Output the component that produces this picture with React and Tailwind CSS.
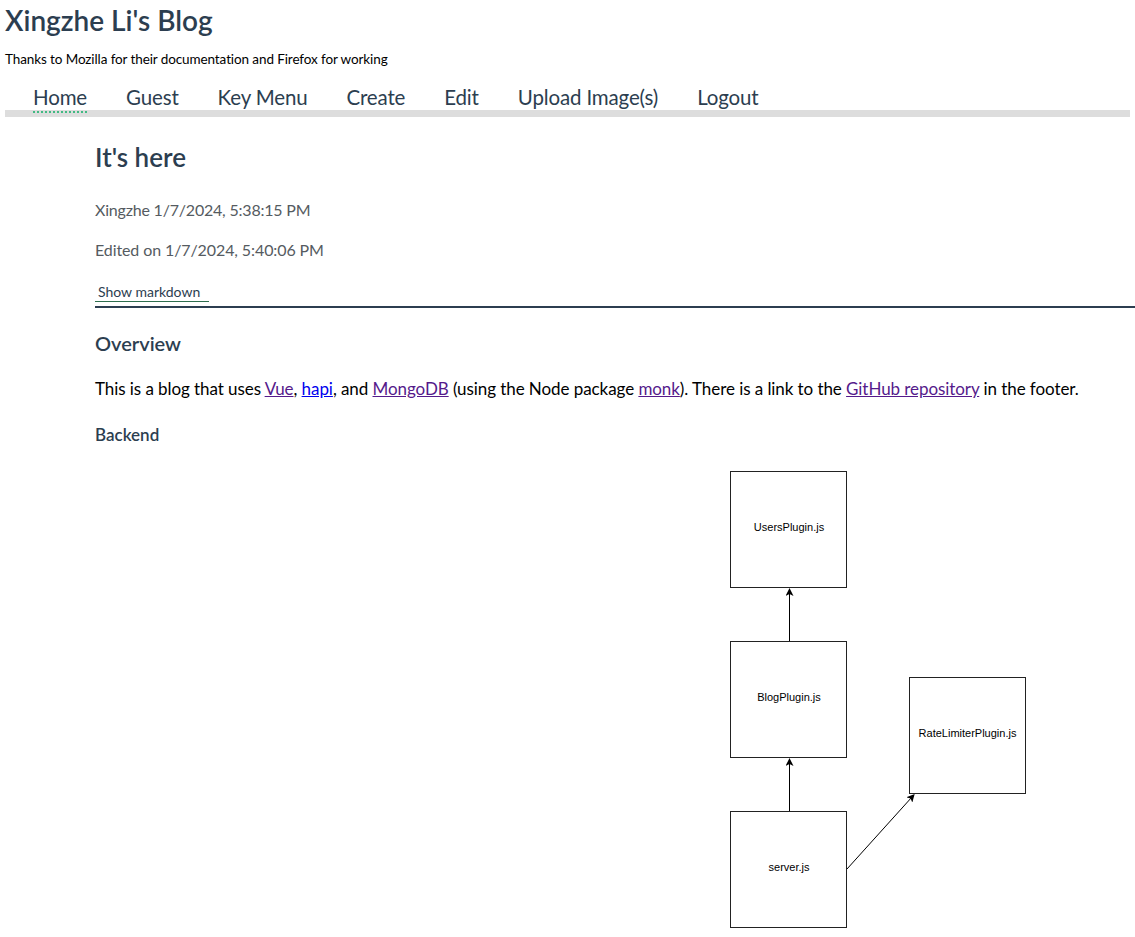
import React from "react";

const font = { fontFamily: "Lato, 'Noto Sans', sans-serif" };

function Diagram() {
  return (
    <svg width="320" height="462" viewBox="0 0 320 462" className="block ml-[634px] mt-[22px]">
      <defs>
        <marker id="ah" markerWidth="8" markerHeight="8" refX="4" refY="4" orient="auto" markerUnits="userSpaceOnUse">
          <path d="M0,0 L8,4 L0,8 L2,4 Z" fill="#000" />
        </marker>
      </defs>
      <g fill="#fff" stroke="#222" strokeWidth="1">
        <rect x="1.5" y="1.5" width="116" height="116" />
        <rect x="1.5" y="171.5" width="116" height="116" />
        <rect x="1.5" y="341.5" width="116" height="116" />
        <rect x="180.5" y="207.5" width="116" height="116" />
      </g>
      <g stroke="#000" strokeWidth="1" fill="none">
        <line x1="60.5" y1="171" x2="60.5" y2="122" markerEnd="url(#ah)" />
        <line x1="60.5" y1="341" x2="60.5" y2="292" markerEnd="url(#ah)" />
        <line x1="118" y1="399" x2="183" y2="327" markerEnd="url(#ah)" />
      </g>
      <g fontFamily="'Liberation Sans', Arial, sans-serif" fontSize="11" fill="#000" textAnchor="middle">
        <text x="60" y="61">UsersPlugin.js</text>
        <text x="60" y="231">BlogPlugin.js</text>
        <text x="60" y="401">server.js</text>
        <text x="238.5" y="267">RateLimiterPlugin.js</text>
      </g>
    </svg>
  );
}

export default function App() {
  const navItems = ["Guest", "Key Menu", "Create", "Edit", "Upload Image(s)", "Logout"];
  return (
    <div className="min-h-[937px] bg-white px-[5px] text-[#2c3e50] overflow-hidden" style={font}>
      <h1 className="text-[28px] font-semibold leading-[40px] tracking-[0px]">Xingzhe Li's Blog</h1>
      <p className="mt-[9px] text-[13.5px] leading-[20px] tracking-[-0.1px] text-black">
        Thanks to Mozilla for their documentation and Firefox for working
      </p>
      <nav className="mt-[15px] flex pl-[28px] text-[20.5px] leading-[26px] tracking-[-0.15px] gap-[39px]">
        <a className="underline decoration-dotted decoration-[#42b983] decoration-2 underline-offset-[6px]">Home</a>
        {navItems.map((n) => (
          <a key={n}>{n}</a>
        ))}
      </nav>
      <div className="h-[7px] bg-[#dddddd]" />
      <main className="ml-[90px] mr-[-5px]">
        <h2 className="mt-[24px] text-[26px] font-semibold leading-[32px]">It's here</h2>
        <p className="mt-[25px] text-[16px] leading-[24px] tracking-[-0.2px] text-[#555b61]">Xingzhe 1/7/2024, 5:38:15 PM</p>
        <p className="mt-[16px] text-[16px] leading-[24px] tracking-[-0.1px] text-[#555b61]">Edited on 1/7/2024, 5:40:06 PM</p>
        <div className="mt-[20px]">
          <button className="block w-[114px] pl-[3px] text-left text-[14px] leading-[19px] text-[#2c3e50] border-b border-[#2e6e4e]">
            Show markdown
          </button>
        </div>
        <div className="mt-[4px] h-[2px] bg-[#2c3e50]" />
        <h3 className="mt-[21px] text-[20px] font-semibold leading-[28px]">Overview</h3>
        <p className="mt-[19px] text-[17px] leading-[26px] tracking-[-0.07px] text-black">
          This is a blog that uses <a className="underline text-[#551a8b]">Vue</a>,{" "}
          <a className="underline text-[#0000ee]">hapi</a>, and{" "}
          <a className="underline text-[#551a8b]">MongoDB</a> (using the Node package{" "}
          <a className="underline text-[#551a8b]">monk</a>). There is a link to the{" "}
          <a className="underline text-[#551a8b]">GitHub repository</a> in the footer.
        </p>
        <h4 className="mt-[20px] text-[17px] font-semibold leading-[26px]">Backend</h4>
        <Diagram />
      </main>
    </div>
  );
}
